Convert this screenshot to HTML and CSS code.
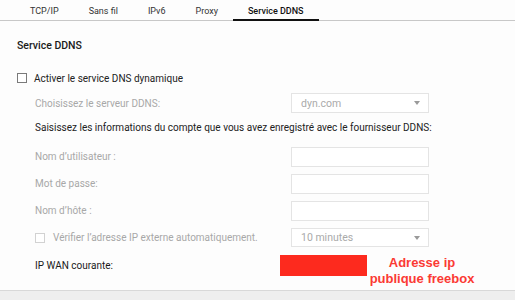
FILE: index.html
```html
<!DOCTYPE html>
<html lang="fr">
<head>
    <meta charset="UTF-8">
    <meta name="viewport" content="width=device-width, initial-scale=1.0">
    <title>Service DDNS</title>
    <link rel="stylesheet" href="styles.css">
</head>
<body>
    <div class="tabs">
        <div class="tab">TCP/IP</div>
        <div class="tab">Sans fil</div>
        <div class="tab">IPv6</div>
        <div class="tab">Proxy</div>
        <div class="tab active">Service DDNS</div>
    </div>

    <div class="panel">
        <h2>Service DDNS</h2>

        <label class="check-row">
            <span class="box"></span>
            <span>Activer le service DNS dynamique</span>
        </label>

        <div class="field first disabled">
            <div class="label">Choisissez le serveur DDNS:</div>
            <div class="select">
                <span>dyn.com</span>
                <span class="caret"></span>
            </div>
        </div>

        <div class="info">Saisissez les informations du compte que vous avez enregistré avec le fournisseur DDNS:</div>

        <div class="field disabled">
            <div class="label">Nom d’utilisateur :</div>
            <div class="input"></div>
        </div>
        <div class="field disabled">
            <div class="label">Mot de passe:</div>
            <div class="input"></div>
        </div>
        <div class="field disabled">
            <div class="label">Nom d’hôte :</div>
            <div class="input"></div>
        </div>

        <div class="field disabled">
            <div class="label sub-check">
                <span class="box light"></span>
                <span>Vérifier l’adresse IP externe automatiquement.</span>
            </div>
            <div class="select small">
                <span>10 minutes</span>
                <span class="caret"></span>
            </div>
        </div>

        <div class="wan-row">
            <div class="wan-label">IP WAN courante:</div>
            <div class="redacted"></div>
            <div class="note">Adresse ip<br>publique freebox</div>
        </div>
    </div>

    <div class="footer"></div>
</body>
</html>
```

FILE: styles.css
```css
body, html {
    margin: 0;
    padding: 0;
    height: 100%;
    background: #fdfdfd;
    font-family: Roboto, "Noto Sans", sans-serif;
    color: #222222;
    font-size: 10px;
    overflow: hidden;
}

body {
    display: flex;
    flex-direction: column;
}

.tabs {
    display: flex;
    flex-shrink: 0;
    padding-left: 15px;
    height: 20px;
    border-bottom: 1px solid #c8c8c8;
    font-size: 9px;
}

.tab {
    padding: 0 15px;
    line-height: 23px;
    color: #333333;
    height: 20px;
}

.tab.active {
    color: #111111;
    font-weight: 500;
    border-bottom: 2px solid #111111;
    height: 19px;
    margin-bottom: -1px;
}

.panel {
    flex: 1;
    padding: 0 17px;
}

.panel h2 {
    margin: 0;
    padding-top: 18px;
    height: 14px;
    font-size: 10.5px;
    font-weight: 500;
    color: #1a1a1a;
}

.check-row {
    display: flex;
    align-items: center;
    gap: 7px;
    margin-top: 19px;
    height: 12px;
    color: #222222;
}

.box {
    display: inline-block;
    width: 8px;
    height: 8px;
    border: 1px solid #7a7a7a;
    background: #ffffff;
}

.box.light {
    border-color: #d2d2d2;
}

.field {
    display: grid;
    grid-template-columns: 256px 138px;
    align-items: center;
    padding-left: 18px;
    height: 27px;
}

.field.first {
    margin-top: 4px;
    height: 30px;
}

.field.disabled .label {
    color: #a8a8a8;
}

.sub-check {
    display: flex;
    align-items: center;
    gap: 8px;
}

.select, .input {
    box-sizing: border-box;
    height: 20px;
    border: 1px solid #e4e4e4;
    background: #ffffff;
}

.select {
    display: flex;
    align-items: center;
    justify-content: space-between;
    padding: 0 8px 0 9px;
    color: #aaaaaa;
    font-size: 10.5px;
}

.select.first-sel {
    height: 21px;
}

.select.small {
    height: 19px;
}

.select .caret {
    width: 0;
    height: 0;
    border-left: 3.5px solid transparent;
    border-right: 3.5px solid transparent;
    border-top: 4px solid #9a9a9a;
}

.info {
    padding-left: 18px;
    height: 25px;
    line-height: 20px;
    color: #222222;
}

.wan-row {
    display: flex;
    align-items: flex-start;
    padding-left: 18px;
    margin-top: 4px;
    height: 21px;
}

.wan-label {
    width: 245px;
    line-height: 21px;
    color: #1a1a1a;
}

.redacted {
    width: 87px;
    height: 21px;
    background: #fd2a1e;
}

.note {
    width: 106px;
    margin-left: 2px;
    margin-top: 0;
    text-align: center;
    font-family: "Liberation Sans", Arial, sans-serif;
    font-weight: 700;
    font-size: 13px;
    line-height: 16px;
    color: #fb3a34;
}

.footer {
    flex-shrink: 0;
    height: 9px;
    background: #eeeeee;
    border-top: 1px solid #d8d8d8;
}
```
